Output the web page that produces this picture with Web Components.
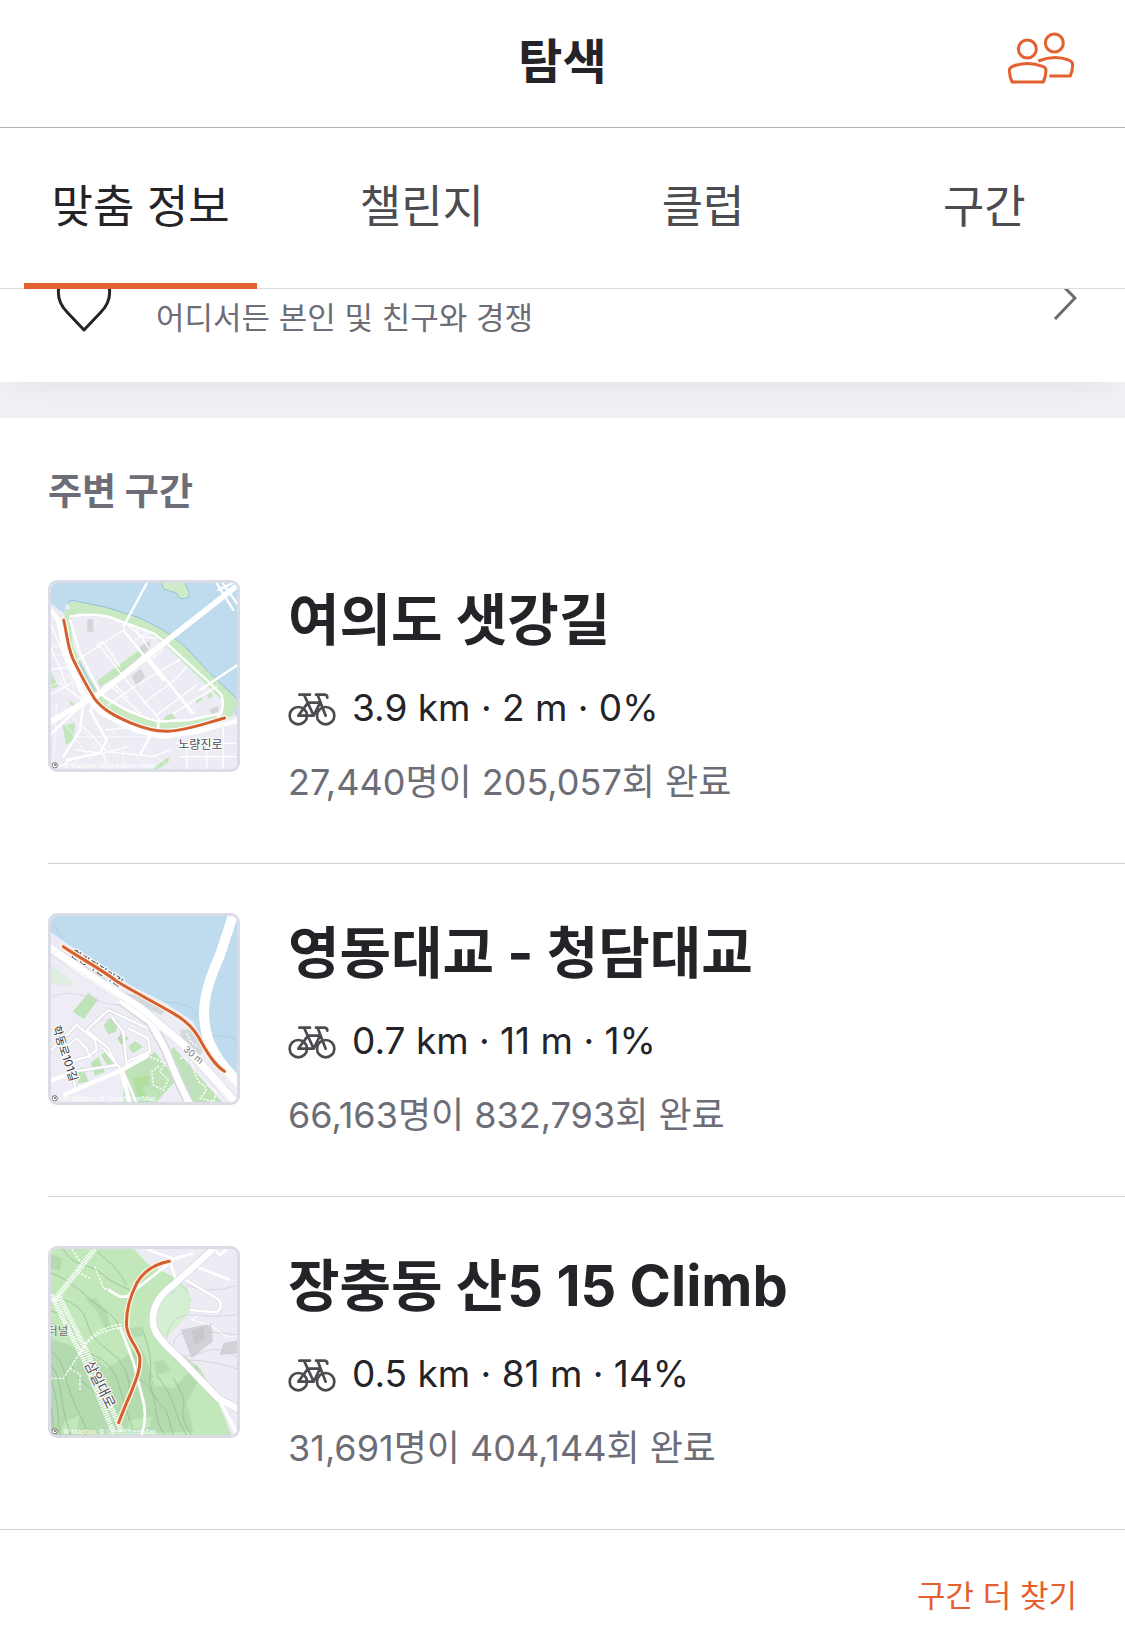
<!DOCTYPE html>
<html lang="ko">
<head>
<meta charset="utf-8">
<meta name="viewport" content="width=device-width, initial-scale=1">
<title>탐색</title>
<style>
  body {
    margin: 0;
    background: #fff;
    color: #242428;
    font-family: Inter, "Noto Sans CJK KR", sans-serif;
    --orange: #e4602f;
    --grey: #6d6d78;
    --line: #d0d0d4;
  }
</style>
</head>
<body>
<explore-header heading="탐색"></explore-header>
<explore-tabs>
  <explore-tab selected>맞춤 정보</explore-tab>
  <explore-tab>챌린지</explore-tab>
  <explore-tab>클럽</explore-tab>
  <explore-tab>구간</explore-tab>
</explore-tabs>
<main>
  <promo-card>어디서든 본인 및 친구와 경쟁</promo-card>
  <segment-list heading="주변 구간">
    <segment-row stats="3.9 km · 2 m · 0%" efforts="27,440명이 205,057회 완료">
      여의도 샛강길
      <svg slot="map" viewBox="33 39 558 558" role="img" aria-label="여의도 샛강길 지도">
        <rect x="24" y="30" width="576" height="576" fill="#edecf4"/>
        <path d="M24 30H600V445L585 435L560 375L505 325L430 240L370 190L280 150L200 115L110 92L80 100L72 130L24 95Z" fill="#bfdcee"/>
        <path d="M72 148L74 118L92 118L82 98L112 94L200 112L300 145L370 180L430 225L510 310L590 385V410L575 440H540L550 395L500 345L375 225L330 190L205 140L110 130L90 150L100 230L150 325L190 385L270 430L370 455L450 450L545 428V448L480 466L390 485L310 475L200 420L130 340L95 260Z" fill="#c9e9c2"/>
        <path d="M80 102Q92 85 116 95L200 112L300 144L370 180L430 225L510 310L600 395" fill="none" stroke="#8fbfd9" stroke-width="3"/>
        <path d="M362 36L372 58L408 68L420 86L444 84L448 68L434 36Z" fill="#cfeac9" stroke="#93c4d4" stroke-width="3"/>
        <path d="M172 332L290 245L330 212V235L230 320L180 350ZM375 440L395 430L408 445L370 455ZM465 390L483 378L488 388L470 400ZM500 375L512 368L518 378L508 386ZM68 465L105 460L100 510L78 525ZM335 596L390 558L382 580L350 600ZM24 290L40 320L55 350L36 356ZM84 390L106 402L98 412Z" fill="#c3e6bd"/>
        <path d="M142 148H158L162 185H142ZM275 318L302 296L315 320L290 350ZM298 232L328 212L330 236L310 246ZM508 420L535 408V425L515 432Z" fill="#d4d5d9"/>
        <g fill="none" stroke="#fff" stroke-linecap="round">
          <path stroke-width="4" d="M112 270L250 180M180 230L250 320L360 450M260 160L300 200L350 205M330 270L370 240M210 345L300 430M205 405L290 345L420 268M310 400L405 330L440 290M350 435L470 345M400 430L530 350M290 180L330 240M170 225L190 215L240 290M285 210L320 190M225 345L265 385M380 330L455 430M24 220L60 290L80 350M24 300L100 290M30 160L130 390M110 330L24 380M140 400L60 340M200 480L290 470M110 540L190 550L260 530M190 550L200 600M130 470L200 545L340 560L390 540M410 520H600M420 560H590M440 520V600M500 520V600M550 450V600M60 590L110 560"/>
          <path stroke-width="7" d="M320 40L250 170M90 140Q150 128 205 140L340 190L380 220L500 330L545 375Q556 420 535 440M90 150L120 250L180 370Q250 425 355 455L450 450L545 430M600 280L480 360M330 500L300 555M355 450V475M24 500L130 400L120 480L70 560M175 380L150 420L200 510L180 550L80 570M530 40L580 120M545 36L595 105M535 60L580 38M330 270L460 430M250 180L370 330"/>
          <path stroke-width="17" d="M600 40L180 370L24 460"/>
          <path stroke-width="14" d="M24 110L55 150L75 245L130 370L185 430L290 483L370 500L470 485L600 450"/>
          <path stroke-width="2" d="M60 220L110 390M24 240L70 220M24 260L85 250M28 350L110 310M60 440L160 580M50 400L40 600M90 430L220 600M160 440L240 590M220 490L320 590M110 500H330M100 580L240 470M250 540V600M300 520L400 600"/>
        </g>
        <path d="M118 278L140 320L165 362" fill="none" stroke="#a9d0e6" stroke-width="5"/>
        <path d="M71 150C80 185 80 220 98 265C115 300 135 340 163 385C190 422 230 440 270 458C310 475 340 484 380 484C440 482 500 458 554 444" fill="none" stroke="#fff" stroke-width="16" stroke-linecap="round"/>
        <path d="M71 150C80 185 80 220 98 265C115 300 135 340 163 385C190 422 230 440 270 458C310 475 340 484 380 484C440 482 500 458 554 444" fill="none" stroke="#d4602f" stroke-width="9" stroke-linecap="round"/>
        <text x="415" y="538" font-size="36" fill="#4c4c50" stroke="#fff" stroke-width="6" paint-order="stroke">노량진로</text>
        <text x="70" y="594" font-size="20" fill="#fff">© Mapbox © OpenStreetMap</text>
        <circle cx="44" cy="586" r="8" fill="#fff" stroke="#666" stroke-width="3"/><circle cx="45" cy="585" r="3" fill="#666"/>
      </svg>
    </segment-row>
    <segment-row stats="0.7 km · 11 m · 1%" efforts="66,163명이 832,793회 완료">
      영동대교 - 청담대교
      <svg slot="map" viewBox="33 33 558 558" role="img" aria-label="영동대교 - 청담대교 지도">
        <rect x="24" y="24" width="576" height="576" fill="#eeedf5"/>
        <path d="M24 24H600V520L550 485L500 430L460 350L370 290L270 240L150 165L24 75Z" fill="#bfdcee"/>
        <path d="M24 50Q55 70 66 102M370 290Q455 290 475 335M515 395Q580 380 600 425" fill="none" stroke="#a4c6dc" stroke-width="2"/>
        <path d="M24 172L100 230L110 240L24 240Z" fill="#e0eee2"/>
        <path d="M145 264L174 284L132 342L98 320ZM190 360L215 335L238 350L228 380L205 388ZM265 425L285 408L310 425L278 445ZM152 475L175 455L195 500L165 512ZM108 498L128 486L146 530L115 535ZM183 450L196 440L222 480L208 490ZM400 425L550 596H470L425 550L395 480L385 450ZM250 490L325 455L345 440L390 500L405 530L350 590L250 596Z" fill="#bfe3b8"/>
        <path d="M232 400L246 385L266 400L245 420ZM278 520L325 510L328 540L305 545L330 596L300 600Z" fill="#b2dfa0"/>
        <path d="M250 262L310 275L350 300L380 310L365 330L290 295ZM420 375L460 370L490 420L485 450L430 430ZM130 180L205 222L190 225L135 195Z" fill="#d3dadb"/>
        <path d="M24 282C60 262 90 262 130 272S180 300 255 300M440 435Q460 500 450 560M160 330L190 345M195 345Q250 345 240 405" fill="none" stroke="#d2d1da" stroke-width="2"/>
        <g fill="none" stroke-linejoin="round">
          <path stroke="#d9d8e2" stroke-width="11" d="M24 445L110 360L165 405L170 435L145 455L90 470L75 430L110 400L140 430L150 460M110 360M90 470L108 560M140 375L205 315L345 380M140 375L205 430L230 480L100 500M215 335L250 380L260 480M265 370L325 400L330 440L260 470M190 430L250 500L290 596M205 315"/>
          <path stroke="#fff" stroke-width="7" d="M24 445L110 360L165 405L170 435L145 455L90 470L75 430L110 400L140 430L150 460M90 470L108 560M140 375L205 315L345 380M140 375L205 430L230 480L100 500M215 335L250 380L260 480M265 370L325 400L330 440L260 470M190 430L250 500L290 596"/>
          <path stroke="#fff" stroke-width="13" d="M70 570L245 495L325 450M24 530L90 505M245 500L270 596"/>
          <path stroke="#d9d8e2" stroke-width="30" d="M24 125L130 200L300 310L430 420L530 530L590 600M240 285L330 350L375 430Q410 520 450 600"/>
          <path stroke="#fff" stroke-width="26" d="M24 125L130 200L300 310L430 420L530 530L590 600"/>
          <path stroke="#fff" stroke-width="20" d="M240 285L330 350L375 430Q410 520 450 600"/>
          <path stroke="#e0dfe7" stroke-width="2" d="M24 140L150 222L300 320L420 425L520 535L580 600M30 95Q60 110 55 135L38 145"/>
          <path stroke="#fff" stroke-width="30" d="M580 28L540 150C500 240 485 300 495 360C502 420 540 480 600 535"/>
          <path stroke="#fff" stroke-width="4" stroke-dasharray="7 4" d="M330 455L375 475L360 500L385 525L370 555L340 540L335 500L360 480M420 460Q450 450 460 490T490 540T480 580L520 590L530 560L500 540M440 385Q450 415 475 425"/>
        </g>
        <g font-size="32" fill="#333" stroke="#fff" stroke-width="6" paint-order="stroke">
          <text transform="translate(90 152) rotate(32)">한강자전거길</text>
          <text transform="translate(37 366) rotate(72)" font-size="34">학동로101길</text>
          <text transform="translate(428 436) rotate(39)" font-size="28" fill="#77777d">30 m</text>
        </g>
        <path d="M70 125C130 165 180 190 235 232C290 265 340 290 400 325C440 348 460 370 475 395C505 450 525 480 553 499" fill="none" stroke="#fff3e8" stroke-width="16" stroke-linecap="round"/>
        <path d="M70 125C130 165 180 190 235 232C290 265 340 290 400 325C440 348 460 370 475 395C505 450 525 480 553 499" fill="none" stroke="#d4602f" stroke-width="9" stroke-linecap="round"/>
        <text x="70" y="588" font-size="20" fill="#fff">© Mapbox © OpenStreetMap</text>
        <circle cx="44" cy="580" r="8" fill="#fff" stroke="#666" stroke-width="3"/><circle cx="45" cy="579" r="3" fill="#666"/>
      </svg>
    </segment-row>
    <segment-row stats="0.5 km · 81 m · 14%" efforts="31,691명이 404,144회 완료">
      장충동 산5 15 Climb
      <svg slot="map" viewBox="33 42 558 558" role="img" aria-label="장충동 산5 15 Climb 지도">
        <rect x="24" y="33" width="576" height="576" fill="#edecf4"/>
        <path d="M24 33H275L320 85L400 125L440 160L455 195L400 260L350 300L480 400L530 490L575 600H24Z" fill="#c1e7bb"/>
        <path d="M400 130L450 180V230L380 310L340 280L345 220Z" fill="#d5efd3"/>
        <path d="M24 310L90 330L150 360L200 400L250 370L300 330L330 400L350 450L400 460L470 390L480 430L440 500L460 590L24 600ZM135 190L165 190L200 225L215 290L190 275L175 235ZM24 55L65 70L60 105L24 100ZM265 280L310 275L310 305L280 305ZM340 380L370 375L395 405L350 420Z" fill="#add5a9" opacity=".7"/>
        <path d="M335 430L380 410L408 415L385 450L345 455ZM75 560L120 540L110 590L60 596ZM270 555L335 545L330 575L260 590Z" fill="#c1e7bb"/>
        <path d="M422 285L515 265L518 320L485 345L455 370ZM550 325L600 315V355L540 360Z" fill="#d1d2d8"/>
        <path d="M455 285L490 275L495 310L465 330Z" fill="#c6c8ce"/>
        <g fill="none" stroke="#8fb58e" stroke-width="2">
          <path d="M70 42Q90 80 130 90T190 120T270 165M24 110Q80 130 130 175T200 230T250 290M60 190Q130 210 140 260T210 350T270 480M24 225Q90 240 100 290T160 360T230 430L280 590M24 340Q65 370 75 420T120 540T125 600M24 380Q55 410 60 460T90 600M24 420Q45 460 50 500T60 600M90 380Q110 430 150 460T190 520M160 42Q230 90 260 150M310 290Q340 370 330 420T380 530L400 600M290 430Q340 450 345 510T375 600M350 420Q390 470 405 520T440 600M400 430Q440 490 430 520T455 600M24 500Q45 540 38 600"/>
        </g>
        <g fill="none" stroke="#cbcad2" stroke-width="2">
          <path d="M440 150Q500 180 600 150M380 310Q390 230 470 240T600 235M400 330Q400 290 460 290T600 300M420 360Q450 370 490 350T600 370M440 375Q520 375 600 405M410 170Q340 180 350 220"/>
        </g>
        <g fill="none" stroke="#fff">
          <g stroke-width="16" stroke-dasharray="4 3">
            <path d="M165 42L40 200"/>
            <path d="M34 180L130 370L220 590"/>
            <path d="M55 180L150 370L245 590"/>
          </g>
          <path stroke-width="4" stroke-dasharray="8 4" d="M95 42L125 85L110 110L150 130M165 95L190 160L215 165M120 360Q145 280 245 268M125 350Q150 290 245 278M125 345L70 430H34M90 400L120 420V465M455 255L510 270L560 305H600M455 255L475 240"/>
          <path stroke-width="8" d="M205 165L240 185H270M320 42L400 72L460 55M390 80L408 135M400 75L260 185M240 275L280 380L305 480Q325 540 305 600"/>
          <path stroke="#dad9e1" stroke-width="11" d="M430 130L530 190Q555 210 530 232L450 225"/>
          <path stroke-width="8" d="M430 130L530 190Q555 210 530 232L450 225M470 95L570 135M525 45L540 60L560 42"/>
          <path stroke="#d4d3db" stroke-width="24" d="M520 42L400 150Q330 200 340 270Q345 305 420 370L535 490L600 525"/>
          <path stroke-width="20" d="M520 42L400 150Q330 200 340 270Q345 305 420 370L535 490L600 525"/>
          <path stroke-width="10" d="M535 490L590 595"/>
        </g>
        <path d="M388 79C340 88 310 110 290 145C270 185 257 230 260 275C265 315 290 330 299 365C303 400 290 430 272 475Q250 525 236 563" fill="none" stroke="#fff3e0" stroke-width="17" stroke-linecap="round"/>
        <path d="M388 79C340 88 310 110 290 145C270 185 257 230 260 275C265 315 290 330 299 365C303 400 290 430 272 475Q250 525 236 563" fill="none" stroke="#d4602f" stroke-width="9" stroke-linecap="round"/>
        <g fill="#55505a" stroke="#fff" stroke-width="6" paint-order="stroke">
          <text x="22" y="299" font-size="34" fill="#7a6868" stroke="#d5efd3">터널</text>
          <text transform="translate(132 386) rotate(63)" font-size="42">삼일대로</text>
        </g>
        <text x="70" y="597" font-size="20" fill="#fff">© Mapbox © OpenStreetMap</text>
        <circle cx="44" cy="589" r="8" fill="#fff" stroke="#666" stroke-width="3"/><circle cx="45" cy="588" r="3" fill="#666"/>
      </svg>
    </segment-row>
    <a slot="more" href="#segments">구간 더 찾기</a>
  </segment-list>
</main>

<script>
const html = String.raw;

class ExploreHeader extends HTMLElement {

  TEMPLATE = html`
    <style>
      :host {
        display: block;
        border-bottom: 1px solid #b4b4b8;
      }
      header {
        display: grid;
        grid-template-columns: 1fr auto 1fr;
        align-items: center;
        height: 123px;
        padding: 0 48px 4px;
      }
      h1 {
        grid-column: 2;
        margin: 0;
        font-size: 48px;
        line-height: 72px;
      }
      button {
        justify-self: end;
        border: 0;
        padding: 0 0 8px;
        background: none;
        color: var(--orange);
      }
      svg {
        display: block;
        width: 72px;
        height: 56px;
      }
    </style>
    <header>
      <h1></h1>
      <button type="button" aria-label="친구 찾기">
        <svg viewBox="75 92 216 168" fill="none" stroke="currentColor" stroke-width="9">
          <circle cx="142" cy="149" r="27"/>
          <circle cx="223" cy="131" r="27"/>
          <path d="M96 248H190Q197 234 198 212Q197 204 188 201Q142 184 98 201Q88 206 88 213Q89 234 96 248Z" stroke-linejoin="round"/>
          <path d="M175 185Q222 166 266 182Q279 188 278 196Q278 214 271 230H208"/>
        </svg>
      </button>
    </header>
  `

  constructor() {
    super();
    this.attachShadow({ mode: 'open' });
    this.shadowRoot.innerHTML = this.TEMPLATE;
  }

  connectedCallback() {
    this.shadowRoot.querySelector('h1').textContent = this.getAttribute('heading');
  }
}

class ExploreTabs extends HTMLElement {

  TEMPLATE = html`
    <style>
      :host {
        display: block;
        border-bottom: 1px solid #dcdce0;
      }
      /* the selected tab's bar covers the bottom line */
      nav {
        display: grid;
        grid-template-columns: repeat(4, 1fr);
        height: 161px;
        margin-bottom: -1px;
      }
    </style>
    <nav><slot></slot></nav>
  `

  constructor() {
    super();
    this.attachShadow({ mode: 'open' });
    this.shadowRoot.innerHTML = this.TEMPLATE;
    this.addEventListener('click', (e) => {
      const tab = e.target.closest('explore-tab');
      if (!tab) return;
      for (const other of this.children) {
        other.toggleAttribute('selected', other === tab);
      }
    });
  }
}

class ExploreTab extends HTMLElement {

  TEMPLATE = html`
    <style>
      :host {
        display: flex;
        padding: 0 24px;
        color: #4b4b50;
      }
      button {
        flex: 1;
        border: 0;
        border-top: 6px solid transparent;
        border-bottom: 6px solid transparent;
        padding: 0 0 10px;
        background: none;
        color: inherit;
        font-family: inherit;
        font-size: 45px;
        white-space: nowrap;
      }
      :host([selected]) {
        color: #242428;
      }
      :host([selected]) button {
        border-top: 0;
        padding-top: 6px;
        border-bottom-color: var(--orange);
      }
    </style>
    <button type="button"><slot></slot></button>
  `

  constructor() {
    super();
    this.attachShadow({ mode: 'open' });
    this.shadowRoot.innerHTML = this.TEMPLATE;
  }
}

class PromoCard extends HTMLElement {

  TEMPLATE = html`
    <style>
      :host {
        display: block;
        overflow: hidden;
        padding-bottom: 36px;
        background: #f1f0f6;
      }
      /* scrolled part way under the tabs */
      .card {
        display: flex;
        align-items: flex-end;
        height: 93px;
        background: #fff;
        box-shadow: 0 12px 36px -12px rgba(0, 0, 0, .07);
      }
      .inner {
        display: flex;
        flex: 1;
        align-items: center;
        gap: 40px;
        padding: 0 48px 20px;
      }
      svg {
        flex: none;
        fill: none;
        stroke: #242428;
        stroke-width: 3;
      }
      p {
        flex: 1;
        margin: 0;
        color: var(--grey);
        font-size: 31px;
        line-height: 48px;
      }
      .chevron {
        stroke: #6a6a70;
      }
    </style>
    <div class="card">
      <div class="inner">
        <svg width="68" height="88" viewBox="0 0 68 88"><path d="M36 56L19 38C11 30 9 22 11 12C16 2 30 3 36 13C42 3 56 2 61 12C63 22 61 30 53 38Z" stroke-linejoin="round"/></svg>
        <p><slot></slot></p>
        <svg class="chevron" width="24" height="88" viewBox="0 0 24 88"><path d="M2 4L22 24L2 45"/></svg>
      </div>
    </div>
  `

  constructor() {
    super();
    this.attachShadow({ mode: 'open' });
    this.shadowRoot.innerHTML = this.TEMPLATE;
  }
}

class SegmentList extends HTMLElement {

  TEMPLATE = html`
    <style>
      :host {
        display: block;
      }
      h2 {
        margin: 0;
        padding: 42px 48px 7px;
        color: var(--grey);
        font-size: 37px;
        line-height: 64px;
      }
      footer {
        display: flex;
        justify-content: flex-end;
        padding: 42px 48px 21px;
      }
      ::slotted(a) {
        color: var(--orange);
        font-size: 31px;
        line-height: 48px;
        text-decoration: none;
      }
    </style>
    <h2></h2>
    <slot></slot>
    <footer><slot name="more"></slot></footer>
  `

  constructor() {
    super();
    this.attachShadow({ mode: 'open' });
    this.shadowRoot.innerHTML = this.TEMPLATE;
  }

  connectedCallback() {
    this.shadowRoot.querySelector('h2').textContent = this.getAttribute('heading');
  }
}

class SegmentRow extends HTMLElement {

  TEMPLATE = html`
    <style>
      :host {
        display: block;
        padding-left: 48px;
      }
      :host(:last-of-type) {
        padding-left: 0;
      }
      article {
        display: flex;
        align-items: flex-start;
        gap: 48px;
        padding: 49px 0 53px;
        border-bottom: 1px solid var(--line);
      }
      :host(:last-of-type) article {
        padding-left: 48px;
      }
      ::slotted(svg) {
        box-sizing: border-box;
        flex: none;
        width: 192px;
        height: 192px;
        border: 3px solid #dcdce6;
        border-radius: 9px;
      }
      h3 {
        margin: 4px 0 24px;
        font-size: 56px;
        line-height: 72px;
      }
      p {
        display: flex;
        align-items: center;
        gap: 16px;
        margin: 0;
        font-size: 37px;
        line-height: 56px;
      }
      .efforts {
        margin-top: 18px;
        color: var(--grey);
        font-size: 36px;
      }
      p svg {
        width: 48px;
        height: 36px;
        fill: none;
        stroke: #4b4b50;
        stroke-width: 8;
      }
    </style>
    <article>
      <slot name="map"></slot>
      <div>
        <h3><slot></slot></h3>
        <p>
          <svg viewBox="54 359 144 108" stroke-linecap="round" stroke-linejoin="round">
            <circle cx="85" cy="436" r="26"/>
            <circle cx="167" cy="436" r="26"/>
            <path d="M88 373H120M103 375L131 436H85L114 397H150L131 436M138 373H164Q172 374 172 382M143 374L167 436"/>
          </svg>
          <span class="stats"></span>
        </p>
        <p class="efforts"></p>
      </div>
    </article>
  `

  constructor() {
    super();
    this.attachShadow({ mode: 'open' });
    this.shadowRoot.innerHTML = this.TEMPLATE;
  }

  connectedCallback() {
    this.shadowRoot.querySelector('.stats').textContent = this.getAttribute('stats');
    this.shadowRoot.querySelector('.efforts').textContent = this.getAttribute('efforts');
  }
}

window.customElements.define('explore-header', ExploreHeader);
window.customElements.define('explore-tabs', ExploreTabs);
window.customElements.define('explore-tab', ExploreTab);
window.customElements.define('promo-card', PromoCard);
window.customElements.define('segment-list', SegmentList);
window.customElements.define('segment-row', SegmentRow);
</script>
</body>
</html>
